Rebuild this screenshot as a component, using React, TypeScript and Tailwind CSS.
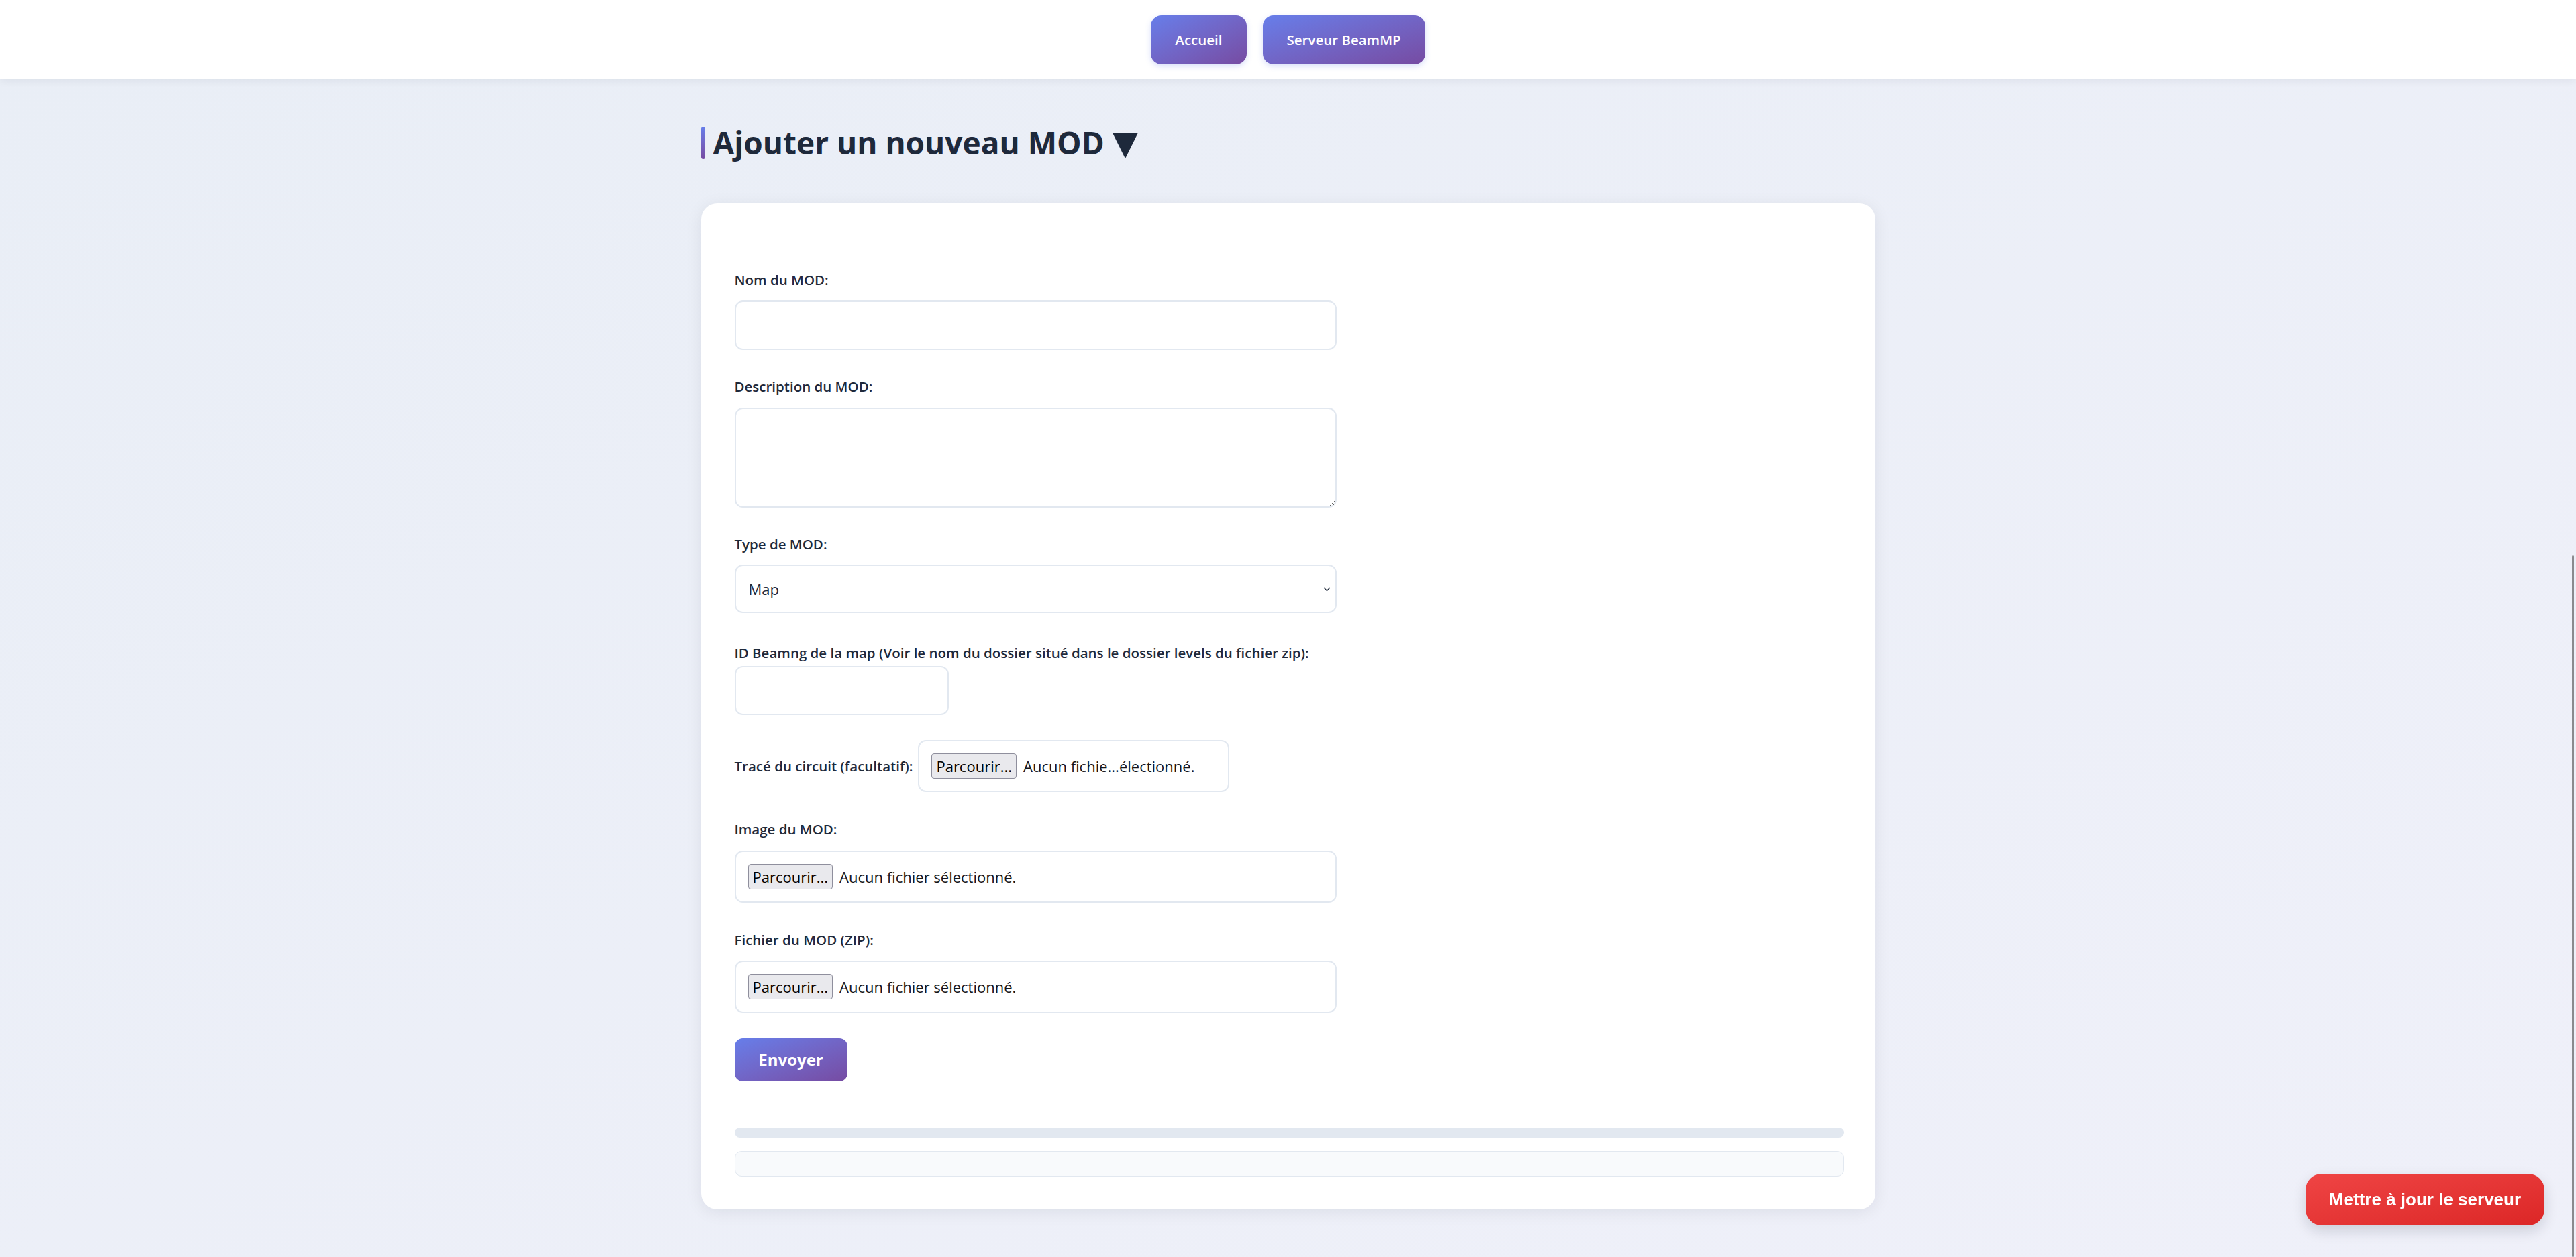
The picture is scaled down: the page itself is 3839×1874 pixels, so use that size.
import React from "react";

const sans = "font-['Segoe_UI','Open_Sans',sans-serif]";

function NavButton({ label }: { label: string }) {
  return (
    <a
      href="#"
      className="flex h-[73px] items-center rounded-[16px] bg-gradient-to-br from-[#667eea] to-[#764ba2] px-[36px] text-[20.5px] font-semibold text-white shadow-[0_3px_8px_rgba(102,126,234,0.25)]"
    >
      {label}
    </a>
  );
}

function Label({ text, mb = "mb-[14px]" }: { text: string; mb?: string }) {
  return (
    <label className={`block text-[20.5px] font-semibold leading-[33px] text-[#1e293b] ${mb}`}>
      {text}
    </label>
  );
}

function FileBox({ text, width = "w-full" }: { text: string; width?: string }) {
  return (
    <div
      className={`flex h-[78px] items-center gap-[10px] rounded-[12px] border-2 border-[#e2e8f0] bg-white px-[18px] text-[22px] ${width}`}
    >
      <span className="flex h-[38px] items-center rounded-[4px] border border-[#8f8f9d] bg-[#e9e9ed] px-[6px] text-black">
        Parcourir...
      </span>
      <span className="whitespace-nowrap text-[#15151a]">{text}</span>
    </div>
  );
}

export default function App() {
  return (
    <div className={`min-h-screen bg-gradient-to-br from-[#e9eef6] to-[#eff0f9] ${sans}`}>
      <header className="sticky top-0 z-10 flex h-[118px] items-center justify-center gap-[24px] bg-white shadow-[0_2px_12px_rgba(15,23,42,0.07)]">
        <NavButton label="Accueil" />
        <NavButton label="Serveur BeamMP" />
      </header>

      <main className="mx-auto w-[1750px] pb-[70px] pt-[71px]">
        <h2 className="flex h-[48px] items-center gap-[12px] text-[46px] font-bold leading-[48px] text-[#1e293b]">
          <span className="h-[48px] w-[6px] rounded-full bg-gradient-to-b from-[#667eea] to-[#764ba2]" />
          <span>
            Ajouter un nouveau MOD{" "}
            <span className="font-['DejaVu_Sans',sans-serif] text-[50px] leading-none">▼</span>
          </span>
        </h2>

        <div className="mt-[66px] rounded-[24px] bg-white pb-[49px] pl-[50px] pr-[47px] pt-[98px] shadow-[0_4px_24px_rgba(15,23,42,0.08)]">
          <form className="w-[897px]">
            <div className="mb-[38px]">
              <Label text="Nom du MOD:" />
              <input
                type="text"
                className="block h-[74px] w-full rounded-[12px] border-2 border-[#e2e8f0] bg-white px-[18px] text-[21px] outline-none"
              />
            </div>

            <div className="mb-[38px]">
              <Label text="Description du MOD:" mb="mb-[15px]" />
              <textarea className="block h-[149px] w-full rounded-[12px] border-2 border-[#e2e8f0] bg-white px-[18px] py-[14px] text-[21px] outline-none" />
            </div>

            <div className="mb-[43px]">
              <Label text="Type de MOD:" />
              <div className="relative">
                <select className="block h-[72px] w-full appearance-none rounded-[12px] border-2 border-[#e2e8f0] bg-white pl-[19px] text-[22px] text-[#1e293b] outline-none">
                  <option>Map</option>
                  <option>Véhicule</option>
                  <option>Autre</option>
                </select>
                <svg
                  className="pointer-events-none absolute right-[9px] top-[33px]"
                  width="11"
                  height="7"
                  viewBox="0 0 11 7"
                  fill="none"
                >
                  <path d="M1 1l4.5 4.5L10 1" stroke="#1e293b" strokeWidth="1.4" />
                </svg>
              </div>
            </div>

            <div className="mb-[37px]">
              <Label
                text="ID Beamng de la map (Voir le nom du dossier situé dans le dossier levels du fichier zip):"
                mb="mb-[3px]"
              />
              <input
                type="text"
                className="block h-[73px] w-[319px] rounded-[12px] border-2 border-[#e2e8f0] bg-white px-[18px] text-[21px] outline-none"
              />
            </div>

            <div className="mb-[39px] flex items-center gap-[8px]">
              <label className="text-[20.5px] font-semibold text-[#1e293b]">
                Tracé du circuit (facultatif):
              </label>
              <FileBox text="Aucun fichie...électionné." width="w-[464px]" />
            </div>

            <div className="mb-[39px]">
              <Label text="Image du MOD:" mb="mb-[15px]" />
              <FileBox text="Aucun fichier sélectionné." />
            </div>

            <div className="mb-[38px]">
              <Label text="Fichier du MOD (ZIP):" />
              <FileBox text="Aucun fichier sélectionné." />
            </div>

            <button
              type="button"
              className="flex h-[64px] w-[168px] items-center justify-center rounded-[12px] bg-gradient-to-br from-[#667eea] to-[#764ba2] text-[24px] font-bold text-white"
            >
              Envoyer
            </button>
          </form>

          <div className="mt-[69px] h-[15px] rounded-full bg-[#e2e8f0]" />
          <div className="mt-[20px] h-[38px] rounded-[10px] border border-[#e2e8f0] bg-[#f8fafc]" />
        </div>
      </main>

      <button
        type="button"
        className="fixed bottom-[47px] right-[47px] flex h-[77px] w-[356px] items-center justify-center rounded-[24px] bg-gradient-to-br from-[#ef4444] to-[#dc2626] font-['Tahoma','Liberation_Sans',sans-serif] text-[26px] font-bold text-white shadow-[0_8px_20px_rgba(15,23,42,0.15)]"
      >
        Mettre à jour le serveur
      </button>

      <div className="fixed bottom-0 right-[3px] top-[828px] w-[3px] rounded-full bg-[#8a8a8e]" />
    </div>
  );
}
